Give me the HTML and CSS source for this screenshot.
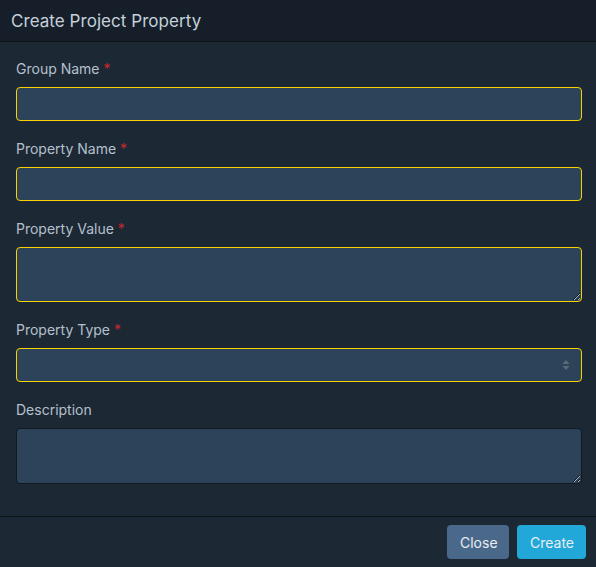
FILE: index.html
```html
<!DOCTYPE html>
<html lang="en">
<head>
<meta charset="utf-8">
<title>Create Project Property</title>
<link rel="stylesheet" href="styles.css">
</head>
<body>
<div class="modal">
  <header class="modal-header">
    <h1 class="modal-title">Create Project Property</h1>
  </header>
  <form class="modal-body">
    <div class="field">
      <label class="label">Group Name <span class="req">*</span></label>
      <input class="control required" type="text">
    </div>
    <div class="field">
      <label class="label">Property Name <span class="req">*</span></label>
      <input class="control required" type="text">
    </div>
    <div class="field">
      <label class="label">Property Value <span class="req">*</span></label>
      <textarea class="control area required"></textarea>
    </div>
    <div class="field">
      <label class="label">Property Type <span class="req">*</span></label>
      <div class="select-wrap">
        <select class="control select required"><option></option></select>
        <svg class="select-arrows" width="8" height="12" viewBox="0 0 8 12"><path d="M4 1 L7.5 5 L0.5 5 Z M4 11 L7.5 7 L0.5 7 Z" fill="#5b6a78"/></svg>
      </div>
    </div>
    <div class="field">
      <label class="label">Description</label>
      <textarea class="control area plain"></textarea>
    </div>
  </form>
  <footer class="modal-footer">
    <button class="btn btn-close" type="button">Close</button>
    <button class="btn btn-create" type="button">Create</button>
  </footer>
</div>
</body>
</html>
```
FILE: styles.css
```css
html, body {
  margin: 0;
  padding: 0;
  background: #1d2835;
  font-family: Inter, "Noto Sans", sans-serif;
}
.modal {
  width: 596px;
  height: 567px;
  display: flex;
  flex-direction: column;
  background: #1d2835;
}
.modal-header {
  height: 41px;
  background: #161f29;
  border-bottom: 1px solid #0c1116;
  display: flex;
  align-items: center;
  padding: 0 11px;
  box-sizing: content-box;
}
.modal-title {
  margin: 0;
  font-size: 17px;
  font-weight: 400;
  color: #c5d0db;
  letter-spacing: 0.05px;
}
.modal-body {
  flex: 1;
  padding: 16px 14px 0 16px;
  display: flex;
  flex-direction: column;
  gap: 17px;
}
.field {
  display: flex;
  flex-direction: column;
  gap: 8px;
}
.label {
  font-size: 14px;
  line-height: 21px;
  color: #b4c0cc;
}
.req {
  color: #c8282d;
}
.control {
  box-sizing: border-box;
  width: 100%;
  height: 34px;
  margin: 0;
  background: #2d4359;
  border: 1px solid #f8d200;
  border-radius: 4px;
  color: #d0d8e0;
  font-family: inherit;
  font-size: 14px;
  padding: 6px 10px;
  outline: none;
}
.area {
  height: 55px;
  resize: vertical;
  display: block;
}
.plain {
  height: 56px;
  border-color: #111920;
}
.select-wrap {
  position: relative;
}
.select {
  appearance: none;
  -webkit-appearance: none;
  display: block;
}
.select-arrows {
  position: absolute;
  right: 12px;
  top: 11px;
}
.modal-footer {
  height: 51px;
  box-sizing: border-box;
  border-top: 1px solid #0c1116;
  display: flex;
  justify-content: flex-end;
  align-items: flex-start;
  gap: 8px;
  padding: 8px 10px 0 0;
}
.btn {
  height: 34px;
  border: none;
  border-radius: 4px;
  font-family: inherit;
  font-size: 14px;
  color: #e8eef4;
  padding: 0 13px;
  cursor: pointer;
}
.btn-close {
  width: 62px;
  background: #4a6889;
}
.btn-create {
  width: 69px;
  background: #22a7d9;
}
```
